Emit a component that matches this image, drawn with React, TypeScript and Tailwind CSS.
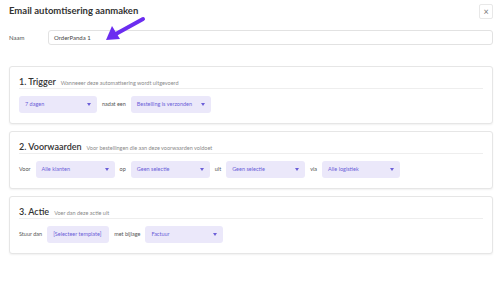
import React from "react"

const Select = ({ label, w, caret = true }: { label: string; w: string; caret?: boolean }) => (
  <div className={`flex h-[17px] items-center justify-between whitespace-nowrap rounded-[3px] bg-[#ebe8fa] px-[6px] text-[5.5px] text-[#6c5fd8] ${w}`}>
    <span>{label}</span>
    {caret && <span className="h-0 w-0 border-x-[2.5px] border-t-[3px] border-x-transparent border-t-[#6c5fd8]" />}
  </div>
)

const Word = ({ children }: { children: React.ReactNode }) => (
  <span className="whitespace-nowrap text-[5.5px] text-[#555]">{children}</span>
)

const Card = ({ title, sub, children }: { title: string; sub: string; children: React.ReactNode }) => (
  <div className="h-[58px] rounded-[3px] border border-[#e6e6e6] bg-white px-[9px] pt-[10px] shadow-[0_1px_2px_rgba(0,0,0,0.06)]">
    <div className="flex h-[12px] items-baseline gap-[5px] border-b border-[#eeeeee]">
      <span className="text-[9px] leading-[10px] font-semibold text-[#333]">{title}</span>
      <span className="text-[5.5px] text-[#8a8a8a]">{sub}</span>
    </div>
    <div className="mt-[7px] flex items-center gap-[5px]">{children}</div>
  </div>
)

export default function App() {
  return (
    <div className="relative h-[281px] w-[500px] overflow-hidden bg-white font-['Lato',sans-serif]">
      <div className="flex items-center justify-between pl-[9px] pr-[7px] pt-[4px]">
        <h1 className="text-[9.5px] font-bold text-[#333]">Email automtisering aanmaken</h1>
        <button className="flex h-[15px] w-[14px] items-center justify-center rounded-[2px] border border-[#e8e8e8] text-[9px] leading-none text-[#777]">
          ×
        </button>
      </div>

      <div className="mt-[11px] flex items-center pl-[9px] pr-[7px]">
        <span className="w-[39px] text-[6px] text-[#555]">Naam</span>
        <div className="flex h-[15px] flex-1 items-center rounded-[3px] border border-[#e2e2e2] px-[5px] text-[6px] text-[#444]">
          OrderPanda 1
        </div>
      </div>

      <svg className="absolute left-[104px] top-[16px]" width="42" height="27" viewBox="0 0 42 27">
        <line x1="39" y1="3" x2="10" y2="19" stroke="#6b2df0" strokeWidth="4" strokeLinecap="round" />
        <polygon points="2,24 8,10 16,23" fill="#6b2df0" />
      </svg>

      <div className="mt-[21px] flex flex-col gap-[7px] pl-[9px] pr-[7px]">
        <Card title="1. Trigger" sub="Wanneeer deze automatisering wordt uitgevoerd">
          <Select label="7 dagen" w="w-[78px]" />
          <Word>nadat een</Word>
          <Select label="Bestelling is verzonden" w="w-[80px]" />
        </Card>
        <Card title="2. Voorwaarden" sub="Voor bestellingen die aan deze voorwaarden voldoet">
          <Word>Voor</Word>
          <Select label="Alle klanten" w="w-[79px]" />
          <Word>op</Word>
          <Select label="Geen selectie" w="w-[79px]" />
          <Word>uit</Word>
          <Select label="Geen selectie" w="w-[79px]" />
          <Word>via</Word>
          <Select label="Alle logistiek" w="w-[78px]" />
        </Card>
        <Card title="3. Actie" sub="Voer dan deze actie uit">
          <Word>Stuur dan</Word>
          <Select label="[Selecteer template]" w="w-[62px]" caret={false} />
          <Word>met bijlage</Word>
          <Select label="Factuur" w="w-[78px]" />
        </Card>
      </div>
    </div>
  )
}
